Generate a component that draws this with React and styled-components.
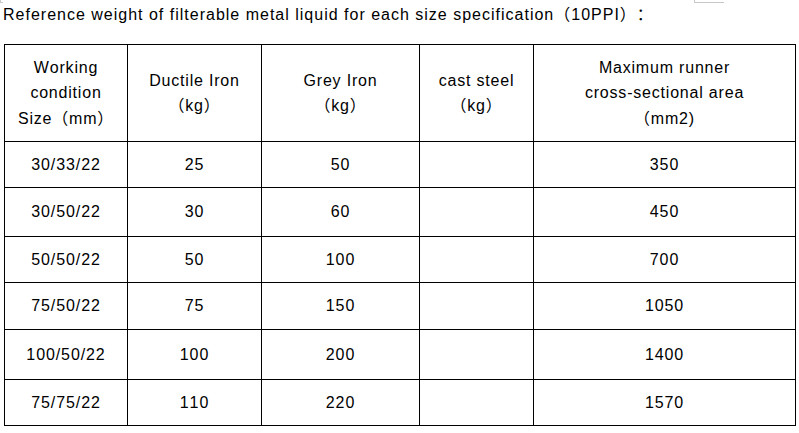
import React from "react";
import styled, { createGlobalStyle } from "styled-components";

const Global = createGlobalStyle`
  html, body { margin: 0; padding: 0; background: #fff; }
  body {
    font-family: "Liberation Sans", Arial, "Noto Sans CJK SC", sans-serif;
    color: #000;
    text-spacing-trim: space-all;
    font-kerning: none;
  }
`;

const Page = styled.div`
  position: relative;
  width: 799px;
  height: 433px;
  overflow: hidden;
  background: #fff;
`;

const Title = styled.p`
  margin: 0 0 17px 0;
  padding: 3px 0 0 3px;
  font-size: 16px;
  line-height: 24px;
  letter-spacing: 1px;
  white-space: nowrap;
`;

const Grid = styled.div`
  display: grid;
  grid-template-columns: 123px 134px 158px 114px 262px;
  grid-template-rows: 97px 46px 49px 46px 47px 50px 46px;
  width: max-content;
  margin-left: 4px;
  border-left: 1px solid #000;
  border-top: 1px solid #000;
`;

const Cell = styled.div`
  box-sizing: border-box;
  display: flex;
  flex-direction: column;
  align-items: center;
  justify-content: center;
  text-align: center;
  border-right: 1px solid #000;
  border-bottom: 1px solid #000;
  font-size: 16px;
  line-height: ${(p) => (p.$head ? "25.5px" : "20px")};
  letter-spacing: ${(p) => (p.$head ? "0.8px" : "0.9px")};
  white-space: nowrap;
`;

const CornerMark = styled.span`
  position: absolute;
  top: 0;
  left: ${(p) => p.$left}px;
  width: ${(p) => p.$w}px;
  height: ${(p) => p.$h}px;
  border-left: 1px solid #c8c8c8;
  border-bottom: 1px solid #c8c8c8;
  box-sizing: border-box;
`;

const headers = [
  ["Working", "condition", "Size（mm）"],
  ["Ductile Iron", "（kg）"],
  ["Grey Iron", "（kg）"],
  ["cast steel", "（kg）"],
  ["Maximum runner", "cross-sectional area", "（mm2)"],
];

const rows = [
  ["30/33/22", "25", "50", "", "350"],
  ["30/50/22", "30", "60", "", "450"],
  ["50/50/22", "50", "100", "", "700"],
  ["75/50/22", "75", "150", "", "1050"],
  ["100/50/22", "100", "200", "", "1400"],
  ["75/75/22", "110", "220", "", "1570"],
];

export default function App() {
  return (
    <Page>
      <Global />
      <CornerMark $left={0} $w={3} $h={3} />
      <CornerMark $left={694} $w={30} $h={3} />
      <Title>
        Reference weight of filterable metal liquid for each size specification（10PPI）：
      </Title>
      <Grid>
        {headers.map((lines, i) => (
          <Cell key={"h" + i} $head>
            {lines.map((l, j) => (
              <span key={j}>{l}</span>
            ))}
          </Cell>
        ))}
        {rows.map((r, ri) =>
          r.map((v, ci) => <Cell key={ri + "-" + ci}>{v}</Cell>)
        )}
      </Grid>
    </Page>
  );
}
